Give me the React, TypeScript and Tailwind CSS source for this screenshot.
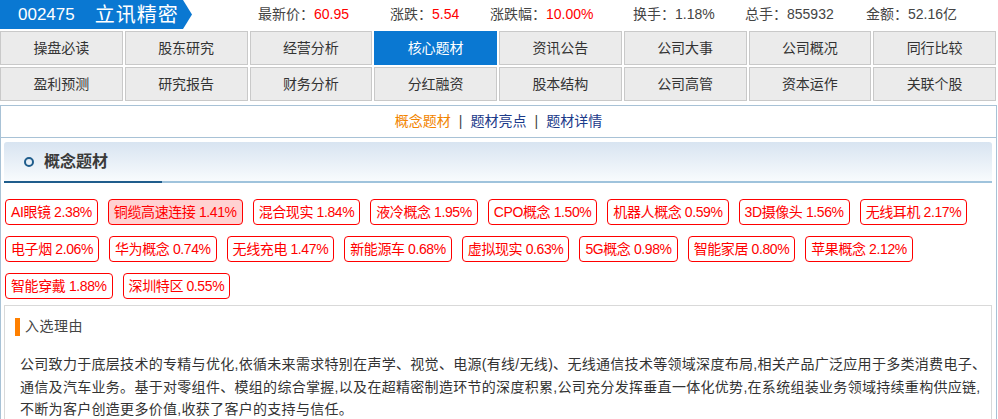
import React from 'react'

const font = { fontFamily: '"Liberation Sans", "Noto Sans CJK SC", sans-serif' }

const stats = [
  { label: '最新价', value: '60.95', red: true, w: 'w-[132px]' },
  { label: '涨跌', value: '5.54', red: true, w: 'w-[100px]' },
  { label: '涨跌幅', value: '10.00%', red: true, w: 'w-[143px]' },
  { label: '换手', value: '1.18%', red: false, w: 'w-[112px]' },
  { label: '总手', value: '855932', red: false, w: 'w-[121px]' },
  { label: '金额', value: '52.16亿', red: false, w: 'w-[120px]' },
]

const tabs = [
  '操盘必读', '股东研究', '经营分析', '核心题材', '资讯公告', '公司大事', '公司概况', '同行比较',
  '盈利预测', '研究报告', '财务分析', '分红融资', '股本结构', '公司高管', '资本运作', '关联个股',
]

const tagRows = [
  ['AI眼镜 2.38%', '铜缆高速连接 1.41%', '混合现实 1.84%', '液冷概念 1.95%', 'CPO概念 1.50%', '机器人概念 0.59%', '3D摄像头 1.56%', '无线耳机 2.17%'],
  ['电子烟 2.06%', '华为概念 0.74%', '无线充电 1.47%', '新能源车 0.68%', '虚拟现实 0.63%', '5G概念 0.98%', '智能家居 0.80%', '苹果概念 2.12%'],
  ['智能穿戴 1.88%', '深圳特区 0.55%'],
]

const Tag = ({ text }: { text: string }) => {
  const active = text.startsWith('铜缆')
  return (
    <span
      className={`flex h-[26px] shrink-0 items-center whitespace-nowrap rounded-[4px] border border-[#ff0000] px-[5px] text-[14px] tracking-[-0.4px] text-[#ff0000] ${
        active ? 'bg-[#ffd2d2]' : 'bg-white'
      }`}
    >
      {text}
    </span>
  )
}

export default function App() {
  return (
    <div className="w-[998px] bg-white text-[#333]" style={font}>
      {/* header */}
      <div className="flex h-[31px] items-start">
        <div className="flex h-[29px] w-[192px] items-center bg-[#0a78d2] pl-[18px] text-white [clip-path:polygon(0_0,183px_0,192px_50%,183px_100%,0_100%)]">
          <span className="text-[17px]">002475</span>
          <span className="ml-[20px] text-[20px] tracking-[1px]">立讯精密</span>
        </div>
        <div className="ml-[66px] flex h-[29px] items-center text-[14px] text-[#444]">
          {stats.map((s) => (
            <div key={s.label} className={`${s.w} whitespace-nowrap`}>
              {s.label}：
              <span className={s.red ? 'text-[#ff0000]' : 'text-[#444]'}>{s.value}</span>
            </div>
          ))}
        </div>
      </div>

      {/* tabs */}
      <div className="grid w-[996px] grid-cols-8 gap-x-[2px] gap-y-[2px]">
        {tabs.map((t) => (
          <div
            key={t}
            className={`flex h-[34px] items-center justify-center border text-[14px] ${
              t === '核心题材'
                ? 'border-[#0a78d2] bg-[#0a78d2] text-white'
                : 'border-[#c9c9c9] bg-[#ebebeb] text-[#333]'
            }`}
          >
            {t}
          </div>
        ))}
      </div>

      {/* content */}
      <div className="mt-[4px] w-[997px] border-x border-t border-[#a8c2d6]">
        <div className="flex h-[32px] items-center justify-center border-b border-[#a8c2d6] text-[14px]">
          <span className="text-[#f28400]">概念题材</span>
          <span className="mx-[8px] text-[#444]">|</span>
          <span className="text-[#1b3a8a]">题材亮点</span>
          <span className="mx-[8px] text-[#444]">|</span>
          <span className="text-[#1b3a8a]">题材详情</span>
        </div>

        <div className="px-[3px] pt-[4px]">
          <div className="relative flex h-[41px] w-[988px] items-center rounded-t-[3px] bg-gradient-to-b from-[#d8e4f1] to-[#f8fbfd] pl-[20px] [border-bottom:2px_solid_#9fc3dc]">
            <span className="h-[10px] w-[10px] rounded-full border-[2px] border-[#1f5d8c]" />
            <span className="ml-[10px] text-[16px] font-bold text-[#3a3a3a]">概念题材</span>
            <span className="absolute bottom-[-2px] left-0 h-[2px] w-[158px] bg-[#1f5d8c]" />
          </div>
        </div>

        <div className="flex flex-col gap-[11px] pl-[4px] pt-[16px]">
          {tagRows.map((row, i) => (
            <div key={i} className="flex gap-[10px]">
              {row.map((t) => (
                <Tag key={t} text={t} />
              ))}
            </div>
          ))}
        </div>

        <div className="mx-[3px] mt-[6px] h-[130px] w-[988px] border border-[#d9d9d9] pt-[10px]">
          <div className="flex items-center pl-[10px]">
            <span className="h-[18px] w-[5px] bg-[#ff8000]" />
            <span className="ml-[5px] text-[14px] tracking-[0.5px] text-[#444]">入选理由</span>
          </div>
          <p className="mt-[16px] whitespace-nowrap px-[15px] text-[14px] leading-[22.5px] tracking-[0.3px] text-[#333]">
            公司致力于底层技术的专精与优化,依循未来需求特别在声学、视觉、电源(有线/无线)、无线通信技术等领域深度布局,相关产品广泛应用于多类消费电子、
            <br />
            通信及汽车业务。基于对零组件、模组的综合掌握,以及在超精密制造环节的深度积累,公司充分发挥垂直一体化优势,在系统组装业务领域持续重构供应链,
            <br />
            不断为客户创造更多价值,收获了客户的支持与信任。
          </p>
        </div>
      </div>
    </div>
  )
}
